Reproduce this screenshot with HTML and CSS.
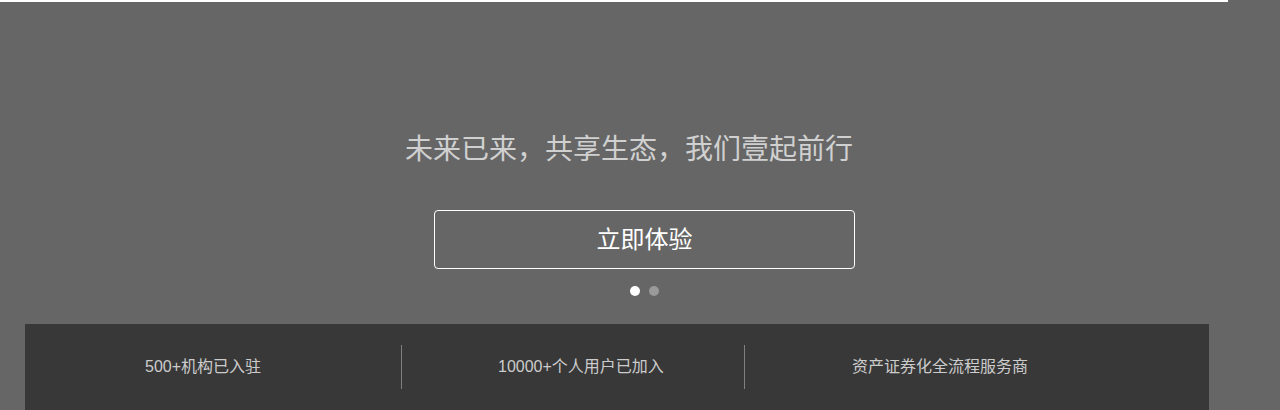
FILE: index.html
```html
<!DOCTYPE html>
<html lang="zh-CN">
<head>
<meta charset="utf-8">
<title>未来已来</title>
<link rel="stylesheet" href="styles.css">
</head>
<body>
<div class="topline"></div>
<section class="hero">
  <h1 class="slogan">未来已来，共享生态，我们壹起前行</h1>
  <a class="cta" href="#">立即体验</a>
  <div class="dots">
    <span class="dot active"></span>
    <span class="dot"></span>
  </div>
</section>
<section class="stats">
  <div class="stat s1">500+机构已入驻</div>
  <div class="divider"></div>
  <div class="stat s2">10000+个人用户已加入</div>
  <div class="divider"></div>
  <div class="stat s3">资产证券化全流程服务商</div>
</section>
</body>
</html>
```

FILE: styles.css
```css
html, body {
  margin: 0;
  padding: 0;
  background: #666666;
  overflow: hidden;
  height: 410px;
}
body {
  font-family: "Liberation Sans", "Noto Sans CJK SC", sans-serif;
}
.topline {
  width: 1228px;
  height: 2px;
  background: #ffffff;
}
.hero {
  display: flex;
  flex-direction: column;
  align-items: flex-start;
}
.slogan {
  margin: 125px 0 0 405px;
  font-family: "Noto Sans CJK SC", sans-serif;
  font-weight: 400;
  font-size: 28px;
  line-height: 40px;
  color: #d0d0d0;
  white-space: nowrap;
}
.cta {
  margin: 43px 0 0 434px;
  box-sizing: border-box;
  width: 421px;
  height: 59px;
  padding-bottom: 5px;
  border: 1px solid #ffffff;
  border-radius: 4px;
  display: flex;
  align-items: center;
  justify-content: center;
  font-family: "Noto Sans CJK SC", sans-serif;
  font-size: 24px;
  color: #ffffff;
  text-decoration: none;
}
.dots {
  margin: 17px 0 0 630px;
  display: flex;
  gap: 9px;
}
.dot {
  width: 10px;
  height: 10px;
  border-radius: 50%;
  background: #9a9a9a;
}
.dot.active {
  background: #ffffff;
}
.stats {
  margin: 28px 0 0 25px;
  width: 1184px;
  height: 100px;
  box-sizing: border-box;
  padding-top: 21px;
  background: #383838;
  display: flex;
  align-items: flex-start;
}
.stat {
  box-sizing: border-box;
  height: 44px;
  line-height: 44px;
  font-size: 16px;
  color: #cccccc;
  white-space: nowrap;
}
.s1 { width: 376px; padding-left: 120px; }
.s2 { width: 342px; padding-left: 96px; }
.s3 { flex: 1; padding-left: 107px; }
.divider {
  width: 1px;
  height: 44px;
  background: #808080;
}
```
